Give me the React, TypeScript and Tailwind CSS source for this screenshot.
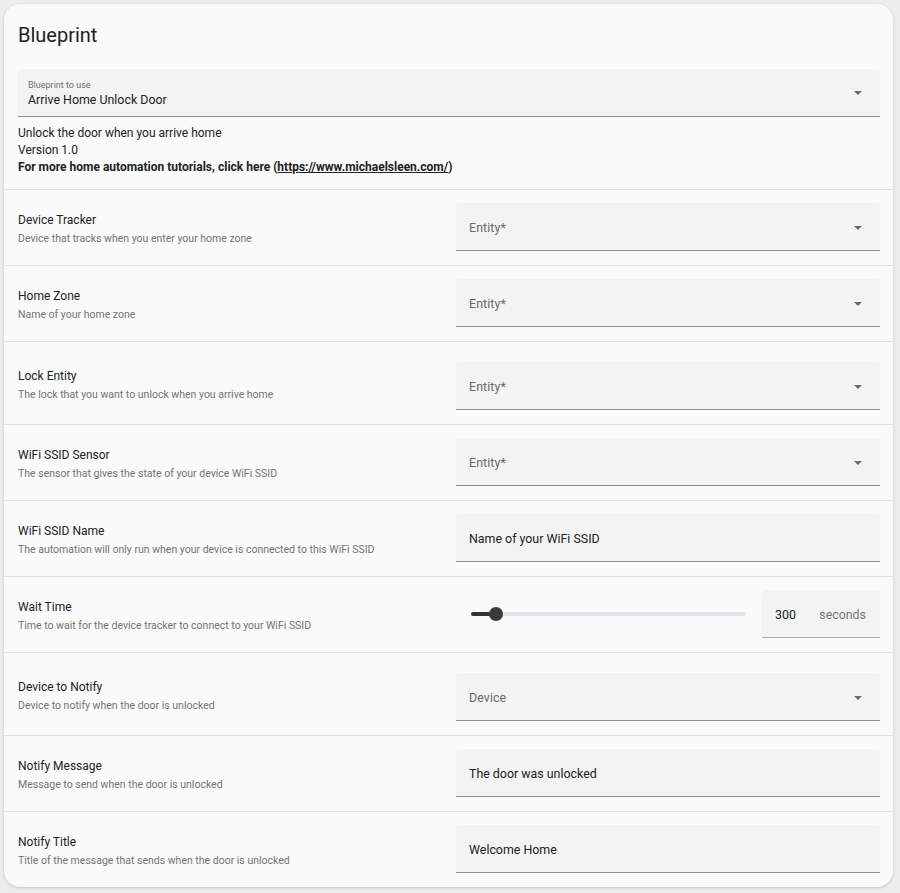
import React from 'react';

type Field =
  | { kind: 'select'; placeholder: string }
  | { kind: 'text'; value: string }
  | { kind: 'slider'; value: number; min: number; max: number; unit: string };

type Input = {
  name: string;
  description: string;
  field: Field;
  tall?: boolean;
};

const inputs: Input[] = [
  { name: 'Device Tracker', description: 'Device that tracks when you enter your home zone', field: { kind: 'select', placeholder: 'Entity*' } },
  { name: 'Home Zone', description: 'Name of your home zone', field: { kind: 'select', placeholder: 'Entity*' } },
  { name: 'Lock Entity', description: 'The lock that you want to unlock when you arrive home', field: { kind: 'select', placeholder: 'Entity*' }, tall: true },
  { name: 'WiFi SSID Sensor', description: 'The sensor that gives the state of your device WiFi SSID', field: { kind: 'select', placeholder: 'Entity*' } },
  { name: 'WiFi SSID Name', description: 'The automation will only run when your device is connected to this WiFi SSID', field: { kind: 'text', value: 'Name of your WiFi SSID' } },
  { name: 'Wait Time', description: 'Time to wait for the device tracker to connect to your WiFi SSID', field: { kind: 'slider', value: 300, min: 0, max: 3600, unit: 'seconds' } },
  { name: 'Device to Notify', description: 'Device to notify when the door is unlocked', field: { kind: 'select', placeholder: 'Device' }, tall: true },
  { name: 'Notify Message', description: 'Message to send when the door is unlocked', field: { kind: 'text', value: 'The door was unlocked' } },
  { name: 'Notify Title', description: 'Title of the message that sends when the door is unlocked', field: { kind: 'text', value: 'Welcome Home' } },
];

function Caret() {
  return (
    <svg width="8" height="4" viewBox="0 0 8 4" className="block shrink-0">
      <path d="M0 0 L8 0 L4 4 Z" fill="#6b6b6b" />
    </svg>
  );
}

function FieldBox({ field }: { field: Field }) {
  if (field.kind === 'slider') {
    const pct = ((field.value - field.min) / (field.max - field.min)) * 100;
    return (
      <div className="flex items-center h-[48px]">
        <div className="flex-1 pl-[15px] pr-[15px]">
          <div className="relative h-[4px] rounded-full bg-[#e6e0ec]">
            <div className="absolute left-0 top-0 h-full rounded-full bg-[#333333]" style={{ width: `calc(${pct}% + 2px)` }} />
            <div
              className="absolute top-1/2 w-[14px] h-[14px] -mt-[7px] -ml-[7px] rounded-full bg-[#3a3a3a]"
              style={{ left: `calc(${pct}% + 2px)` }}
            />
          </div>
        </div>
        <div className="w-[118px] h-[48px] ml-[1px] flex items-center rounded-t-[4px] bg-[#f3f3f3] border-b border-[#a8a8a8] pl-[13px] pr-[14px]">
          <span className="mt-[3px] text-[12.4px] text-[#212121]">{field.value}</span>
          <span className="mt-[3px] ml-auto text-[12.4px] text-[#757575]">{field.unit}</span>
        </div>
      </div>
    );
  }
  return (
    <div className="h-[48px] flex items-center rounded-t-[4px] bg-[#f3f3f3] border-b border-[#8f8f8f] pl-[13px] pr-[18px]">
      {field.kind === 'select' ? (
        <>
          <span className="mt-[3px] text-[12.4px] text-[#6a6a6a] tracking-[0.1px]">{field.placeholder}</span>
          <span className="ml-auto mt-[3px]">
            <Caret />
          </span>
        </>
      ) : (
        <span className="mt-[3px] text-[12.4px] text-[#212121]">{field.value}</span>
      )}
    </div>
  );
}

export default function App() {
  return (
    <div className="min-h-screen bg-[#ededed] p-[4px] pr-[7px]" style={{ fontFamily: 'Roboto, "Noto Sans", sans-serif' }}>
      <div className="w-[889px] rounded-[16px] bg-[#fafafa] shadow-[0_1px_3px_rgba(0,0,0,0.18)] overflow-hidden">
        {/* HEADER */}
        <div className="pl-[14px] pr-[13px] pt-[18px] pb-[13px]">
          <h1 className="text-[20px] leading-[26px] text-[#212121]">Blueprint</h1>

          <div className="mt-[21px] h-[48px] flex items-center rounded-t-[4px] bg-[#f3f3f3] border-b border-[#8f8f8f] pl-[10px] pr-[18px]">
            <div className="flex flex-col pt-[2px]">
              <span className="text-[9px] leading-[11px] text-[#6f6f6f]">Blueprint to use</span>
              <span className="text-[12.4px] leading-[17px] text-[#212121]">Arrive Home Unlock Door</span>
            </div>
            <span className="ml-auto">
              <Caret />
            </span>
          </div>

          <div className="mt-[8px] text-[12px] leading-[17px] text-[#212121]">
            <p>Unlock the door when you arrive home</p>
            <p>Version 1.0</p>
            <p className="font-bold">
              For more home automation tutorials, click here (<span className="underline">https://www.michaelsleen.com/</span>)
            </p>
          </div>
        </div>

        {/* INPUTS */}
        {inputs.map((input) => (
          <div
            key={input.name}
            className={
              'flex items-center border-t border-[#e3e3e3] pl-[14px] pr-[13px] pb-[14px] ' +
              (input.tall ? 'pt-[20px]' : 'pt-[13px]')
            }
          >
            <div className={'flex-1 pr-[16px] ' + (input.tall ? 'pt-0' : 'pt-[6px]')}>
              <div className="text-[12px] leading-[18px] text-[#212121]">{input.name}</div>
              <div className="text-[10.5px] leading-[20px] text-[#737373]">{input.description}</div>
            </div>
            <div className="w-[424px]">
              <FieldBox field={input.field} />
            </div>
          </div>
        ))}
      </div>
    </div>
  );
}
